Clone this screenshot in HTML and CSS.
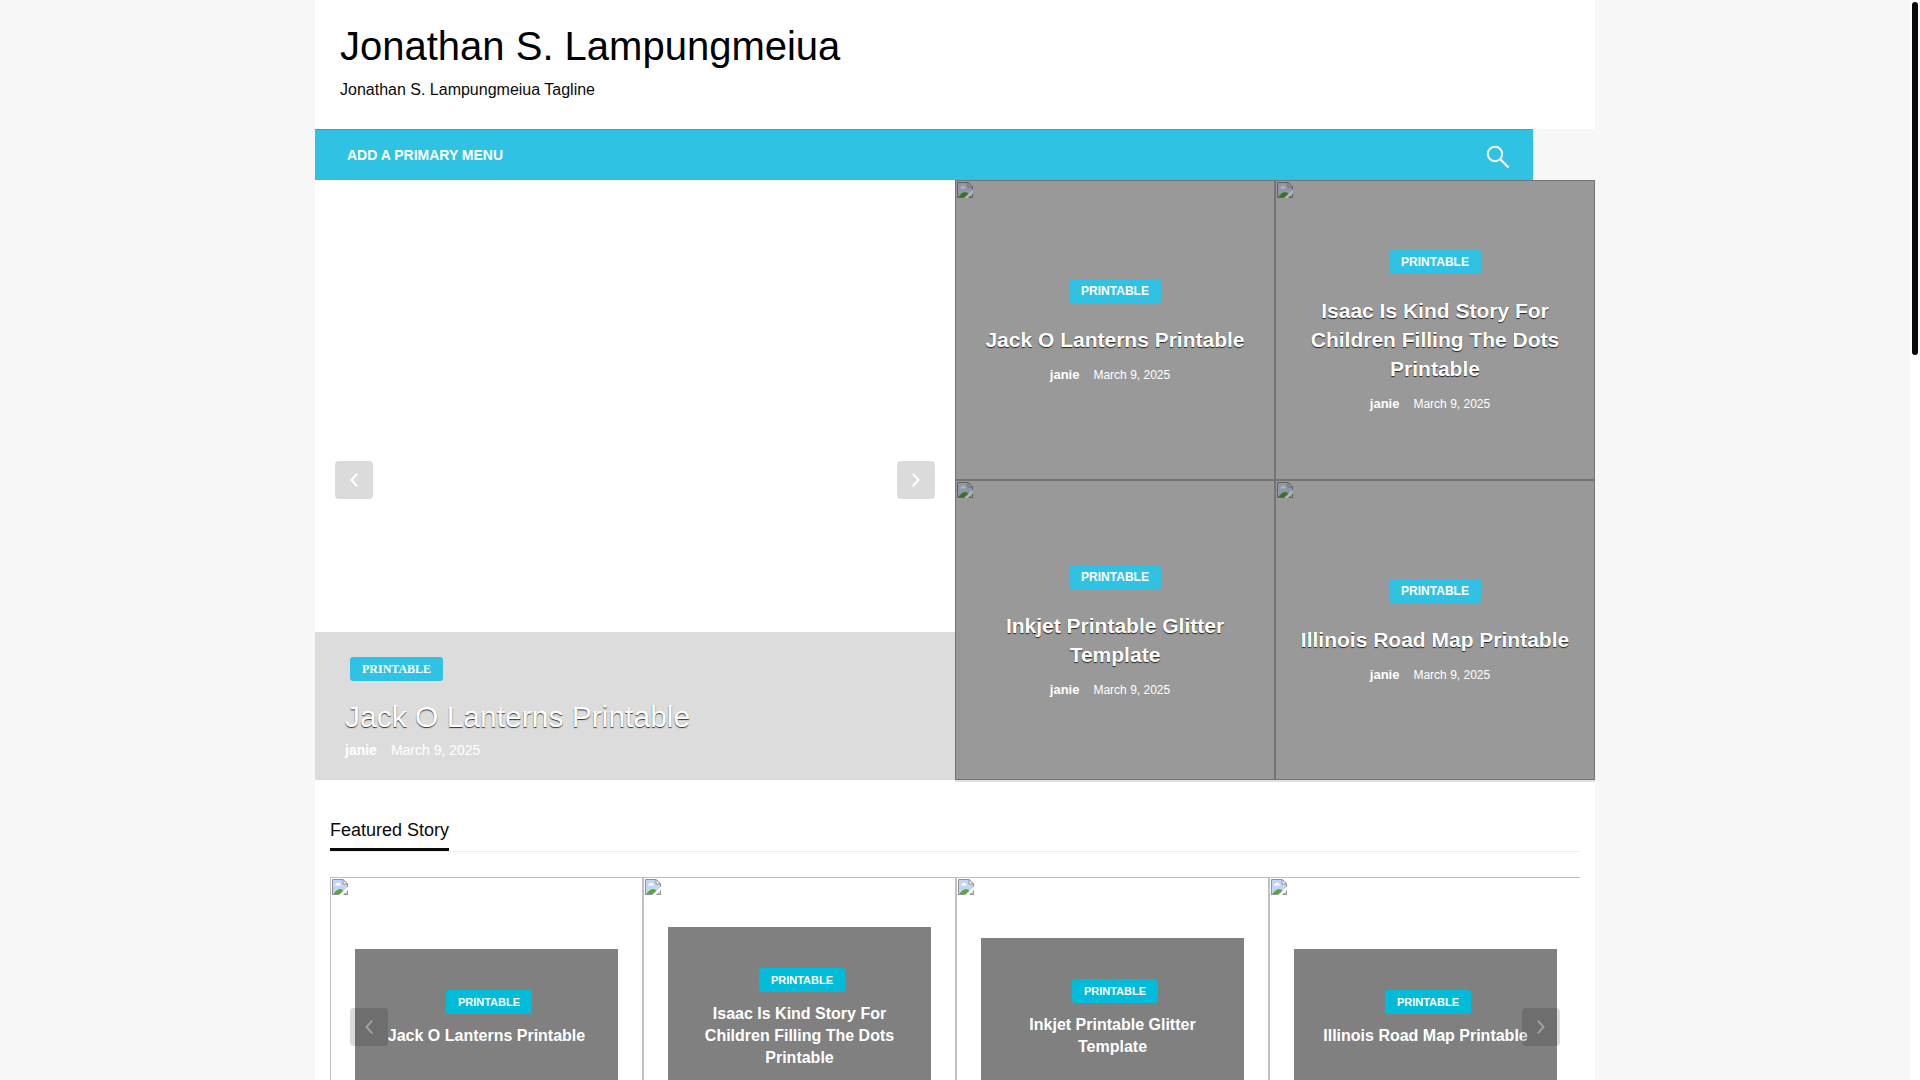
FILE: index.html
```html
<!DOCTYPE html>
<html lang="en">
<head>
<meta charset="utf-8">
<title>Jonathan S. Lampungmeiua</title>
<link rel="stylesheet" href="styles.css">
</head>
<body>
<svg class="defs" width="0" height="0" aria-hidden="true">
  <symbol id="missing" viewBox="0 0 16 16">
    <path d="M.5 .5H11L15.500 5V15.500H.5Z" fill="#c3d5f6"/>
    <path d="M3 6.500Q3 5 4.500 5Q5.200 3.300 7 4Q8.800 4.500 8.800 6.500Z" fill="#fff"/>
    <path d="M1 15.500Q4 10.500 8 10Q12 10.500 14 15.500Z" fill="#55a83a"/>
    <path d="M.5 16V.5H11L15.500 5V16M.5 15.500H15.500" fill="none" stroke="#929292"/>
    <path d="M11 .5V5H15.500Z" fill="#fff" stroke="#929292"/>
    <path d="M16 7.500V11L11 16H7Z" fill="#fff"/>
  </symbol>
  <symbol id="missing-dim" viewBox="0 0 16 16">
    <path d="M.5 .5H11L15.500 5V15.500H.5Z" fill="#8c97ac"/>
    <path d="M3 6.500Q3 5 4.500 5Q5.200 3.300 7 4Q8.800 4.500 8.800 6.500Z" fill="#b4b4b4"/>
    <path d="M1 15.500Q4 10.500 8 10Q12 10.500 14 15.500Z" fill="#3a7328"/>
    <path d="M.5 16V.5H11L15.500 5V16M.5 15.500H15.500" fill="none" stroke="#626262"/>
    <path d="M11 .5V5H15.500Z" fill="#aaa" stroke="#626262"/>
    <path d="M16 7.500V11L11 16H7Z" fill="#b4b4b4"/>
  </symbol>
  <symbol id="prev" viewBox="0 0 8 14"><path d="M7.200 .7L1.500 7L7.200 13.300" fill="none" stroke="currentColor" stroke-width="2"/></symbol>
  <symbol id="next" viewBox="0 0 8 14"><path d="M.8 .7L6.500 7L.8 13.300" fill="none" stroke="currentColor" stroke-width="2"/></symbol>
</svg>

<div class="site">
  <header class="masthead">
    <h1 class="site-title"><a href="#">Jonathan S. Lampungmeiua</a></h1>
    <p class="tagline">Jonathan S. Lampungmeiua Tagline</p>
  </header>

  <nav class="menu">
    <a class="menu-link" href="#">ADD A PRIMARY MENU</a>
    <button class="search" aria-label="Search">
      <svg width="24" height="24" viewBox="0 0 24 24"><circle cx="9" cy="9" r="7.200" fill="none" stroke="#fff" stroke-width="2"/><path d="M14 14L22.500 22.500" stroke="#fff" stroke-width="2.200"/></svg>
    </button>
  </nav>

  <main>
    <section class="hero">
      <div class="slide">
        <div class="arrows">
          <button class="arrow" aria-label="Previous slide"><svg width="8" height="14"><use href="#prev"/></svg></button>
          <button class="arrow" aria-label="Next slide"><svg width="8" height="14"><use href="#next"/></svg></button>
        </div>
        <div class="caption">
          <a class="label label-serif" href="#">PRINTABLE</a>
          <h2 class="slide-title"><a href="#">Jack O Lanterns Printable</a></h2>
          <p class="meta meta-large"><a class="author" href="#">janie</a><time>March 9, 2025</time></p>
        </div>
      </div>
      <div class="tiles">
        <article class="tile">
          <svg class="missing" width="16" height="16"><use href="#missing-dim"/></svg>
          <a class="label" href="#">PRINTABLE</a>
          <h2 class="tile-title"><a href="#">Jack O Lanterns Printable</a></h2>
          <p class="meta"><a class="author" href="#">janie</a><time>March 9, 2025</time></p>
        </article>
        <article class="tile">
          <svg class="missing" width="16" height="16"><use href="#missing-dim"/></svg>
          <a class="label" href="#">PRINTABLE</a>
          <h2 class="tile-title"><a href="#">Isaac Is Kind Story For Children Filling The Dots Printable</a></h2>
          <p class="meta"><a class="author" href="#">janie</a><time>March 9, 2025</time></p>
        </article>
        <article class="tile">
          <svg class="missing" width="16" height="16"><use href="#missing-dim"/></svg>
          <a class="label" href="#">PRINTABLE</a>
          <h2 class="tile-title"><a href="#">Inkjet Printable Glitter Template</a></h2>
          <p class="meta"><a class="author" href="#">janie</a><time>March 9, 2025</time></p>
        </article>
        <article class="tile">
          <svg class="missing" width="16" height="16"><use href="#missing-dim"/></svg>
          <a class="label" href="#">PRINTABLE</a>
          <h2 class="tile-title"><a href="#">Illinois Road Map Printable</a></h2>
          <p class="meta"><a class="author" href="#">janie</a><time>March 9, 2025</time></p>
        </article>
      </div>
    </section>

    <section class="featured">
      <div class="heading"><h2 class="heading-text">Featured Story</h2></div>
      <div class="carousel">
        <div class="track">
          <article class="item">
            <svg class="missing" width="16" height="16"><use href="#missing"/></svg>
            <div class="card"><a class="label label-small" href="#">PRINTABLE</a><h3 class="card-title"><a href="#">Jack O Lanterns Printable</a></h3></div>
          </article>
          <article class="item">
            <svg class="missing" width="16" height="16"><use href="#missing"/></svg>
            <div class="card"><a class="label label-small" href="#">PRINTABLE</a><h3 class="card-title"><a href="#">Isaac Is Kind Story For Children Filling The Dots Printable</a></h3></div>
          </article>
          <article class="item">
            <svg class="missing" width="16" height="16"><use href="#missing"/></svg>
            <div class="card"><a class="label label-small" href="#">PRINTABLE</a><h3 class="card-title"><a href="#">Inkjet Printable Glitter Template</a></h3></div>
          </article>
          <article class="item">
            <svg class="missing" width="16" height="16"><use href="#missing"/></svg>
            <div class="card"><a class="label label-small" href="#">PRINTABLE</a><h3 class="card-title"><a href="#">Illinois Road Map Printable</a></h3></div>
          </article>
        </div>
        <div class="arrows">
          <button class="arrow arrow-faint" aria-label="Previous stories"><svg width="8" height="14"><use href="#prev"/></svg></button>
          <button class="arrow arrow-faint" aria-label="Next stories"><svg width="8" height="14"><use href="#next"/></svg></button>
        </div>
      </div>
    </section>
  </main>
</div>
<div class="rail"><div class="thumb"></div></div>
</body>
</html>
```
FILE: styles.css
```css
* { box-sizing: border-box; }

html { overflow: hidden; }

body {
  margin: 0;
  padding-right: 10px;
  background: #f7f7f7;
  color: #0a0a0a;
  font-family: "Liberation Sans", Arial, sans-serif;
  font-size: 16px;
}

h1, h2, h3, p { margin: 0; font-weight: 400; }
a { color: inherit; text-decoration: none; }
button { border: 0; padding: 0; cursor: pointer; }
svg { display: block; }
.defs { position: absolute; }

.site { max-width: 1280px; margin: 0 auto; }

.masthead { background: #fff; padding: 18px 25px 26px; }
.site-title { color: #000; font-size: 40px; line-height: 56px; }
.tagline { margin-top: 3px; line-height: 26px; }

.menu {
  display: flex;
  align-items: center;
  justify-content: space-between;
  margin-right: 62px;
  height: 51px;
  padding: 0 23px 0 32px;
  background: #2fc2e3;
  border-top: 1px solid #2aaecb;
  color: #fff;
}
.menu-link { font-size: 14px; font-weight: 700; }
.search { padding-top: 3px; background: none; }

.hero { display: grid; grid-template-columns: 1fr 1fr; background: #fff; }

.slide {
  position: relative;
  display: flex;
  flex-direction: column;
  justify-content: flex-end;
}
.arrows {
  position: absolute;
  inset: 0 20px;
  display: flex;
  align-items: center;
  justify-content: space-between;
}
.arrow {
  display: grid;
  place-items: center;
  width: 38px;
  height: 38px;
  border-radius: 4px;
  background: rgba(0, 0, 0, 0.14);
  color: #fff;
}
.arrow-faint { color: rgba(255, 255, 255, 0.35); }

.caption {
  display: flex;
  flex-direction: column;
  align-items: flex-start;
  padding: 25px 30px 20px;
  background: #dcdcdc;
  color: #fff;
}
.slide-title {
  margin-top: 15px;
  font-size: 30px;
  line-height: 42px;
  text-shadow: 0 1px 1px #333;
}

.label {
  padding: 0 12px;
  border-radius: 3px;
  background: #2fc2e3;
  color: #fff;
  font-size: 12px;
  font-weight: 700;
  line-height: 24px;
}
.label-serif { margin-left: 5px; font-family: "Liberation Serif", "Times New Roman", serif; }
.label-small { margin-left: 5px; background: #00bcd8; font-size: 11px; }

.meta {
  display: flex;
  align-items: baseline;
  gap: 14px;
  margin-top: 11px;
  padding-right: 10px;
  font-size: 12px;
  line-height: 20px;
}
.author { font-size: 13px; font-weight: 700; }
.meta-large { margin-top: 2px; font-size: 14px; }
.meta-large .author { font-size: 14px; }

.tiles {
  display: grid;
  grid-template-columns: 1fr 1fr;
  grid-auto-rows: 300px;
  box-shadow: 0 2px 0 #e0e0e0;
}
.tile {
  position: relative;
  display: flex;
  flex-direction: column;
  align-items: center;
  justify-content: center;
  padding: 4px 19px 0;
  border: 1px solid #737373;
  background: #999;
  color: #fff;
  text-align: center;
}
.tile-title {
  margin-top: 22px;
  font-size: 21px;
  font-weight: 700;
  line-height: 29px;
  text-shadow: 0 1px 1px #222;
}
.missing { position: absolute; top: 1px; left: 1px; }

.featured { padding: 34px 15px 40px; background: #fff; }
.heading { display: flex; border-bottom: 1px solid #eee; }
.heading-text {
  padding-bottom: 2px;
  border-bottom: 3px solid #0a0a0a;
  font-size: 18px;
  line-height: 32px;
}

.carousel { position: relative; margin-top: 25px; overflow: hidden; }
.track { display: flex; }
.item {
  position: relative;
  display: flex;
  flex: 0 0 313px;
  align-items: center;
  height: 300px;
  padding: 0 24px;
  border: 1px solid #c0c0c0;
}
.card {
  display: flex;
  flex: 1;
  flex-direction: column;
  align-items: center;
  padding: 41px 25px 58px;
  background: #808080;
  color: #fff;
  text-align: center;
}
.card-title {
  margin-top: 11px;
  font-size: 16px;
  font-weight: 700;
  line-height: 22px;
}

.rail {
  position: fixed;
  top: 0;
  right: 0;
  bottom: 0;
  width: 10px;
  padding: 2px;
  background: #fff;
}
.thumb { height: calc(33% - 2px); border-radius: 3px; background: #0a0a0a; }
```
